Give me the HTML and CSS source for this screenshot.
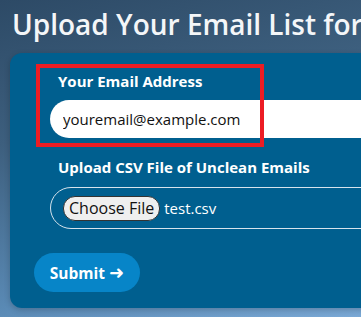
FILE: index.html
```html
<!DOCTYPE html>
<html>
<head>
<meta charset="utf-8">
<link rel="stylesheet" href="styles.css">
</head>
<body>
<div class="page">
  <h1 class="title">Upload Your Email List for Cleaning</h1>
  <form class="card">
    <div class="group">
      <label class="label">Your Email Address</label>
      <input class="text-input" type="text" value="youremail@example.com">
    </div>
    <div class="group">
      <label class="label">Upload CSV File of Unclean Emails</label>
      <div class="file-input"><span class="file-btn">Choose File</span><span class="file-name">test.csv</span></div>
    </div>
    <button class="submit" type="button">Submit <span class="submit-arrow">➜</span></button>
    <div class="highlight"></div>
  </form>
</div>
</body>
</html>
```
FILE: styles.css
```css
html, body {
  margin: 0;
  padding: 0;
  width: 361px;
  height: 317px;
  overflow: hidden;
}
body {
  background: linear-gradient(165deg, #2d4a66 0%, #3d5f7e 35%, #5a8ab5 75%, #7aa9d6 100%);
  font-family: "Open Sans", "Noto Sans", sans-serif;
  color: #fff;
}
.page {
  padding: 0 0 0 10px;
  width: 600px;
}
.title {
  margin: 0;
  padding: 4px 0 0 2px;
  height: 53px;
  box-sizing: border-box;
  font-size: 28px;
  font-weight: 600;
  line-height: 40px;
  white-space: nowrap;
  color: #f4f6f8;
}
.card {
  position: relative;
  background: #005f8f;
  border-radius: 12px;
  width: 560px;
  height: 255px;
  box-sizing: border-box;
  padding: 18px 0 0 24px;
  box-shadow: 0 2px 6px rgba(0,0,0,0.2);
}
.group {
  padding-left: 16px;
  display: flex;
  flex-direction: column;
}
.label {
  padding-left: 8px;
  font-weight: 700;
  font-size: 15px;
  line-height: 20px;
  height: 20px;
  margin-bottom: 9px;
}
.text-input {
  height: 38px;
  box-sizing: border-box;
  border: none;
  border-radius: 19px;
  padding: 0 13px;
  font-family: inherit;
  font-size: 15px;
  color: #111;
  background: #fff;
  margin-bottom: 19px;
  outline: none;
}
.file-input {
  height: 42px;
  margin-top: 1px;
  box-sizing: border-box;
  border: 1px solid #d6e3ec;
  border-radius: 21px;
  display: flex;
  align-items: center;
  padding-left: 12px;
  font-size: 15px;
  margin-bottom: 24px;
}
.file-btn {
  background: #efefef;
  color: #111;
  border: 1px solid #333;
  border-radius: 12px;
  padding: 0 5px;
  height: 25px;
  line-height: 23px;
  box-sizing: border-box;
  font-size: 16px;
  margin-right: 4px;
}
.file-name {
  color: #fff;
}
.submit {
  width: 106px;
  height: 39px;
  border: none;
  border-radius: 20px;
  background: #0785c8;
  color: #fff;
  font-family: inherit;
  font-size: 15.5px;
  font-weight: 700;
  padding: 0;
}
.submit-arrow {
  font-size: 18px;
  font-family: "DejaVu Sans", sans-serif;
  font-weight: 700;
}
.highlight {
  position: absolute;
  left: 26px;
  top: 11px;
  width: 228px;
  height: 83px;
  box-sizing: border-box;
  border: 4px solid #ec1c24;
}
```
